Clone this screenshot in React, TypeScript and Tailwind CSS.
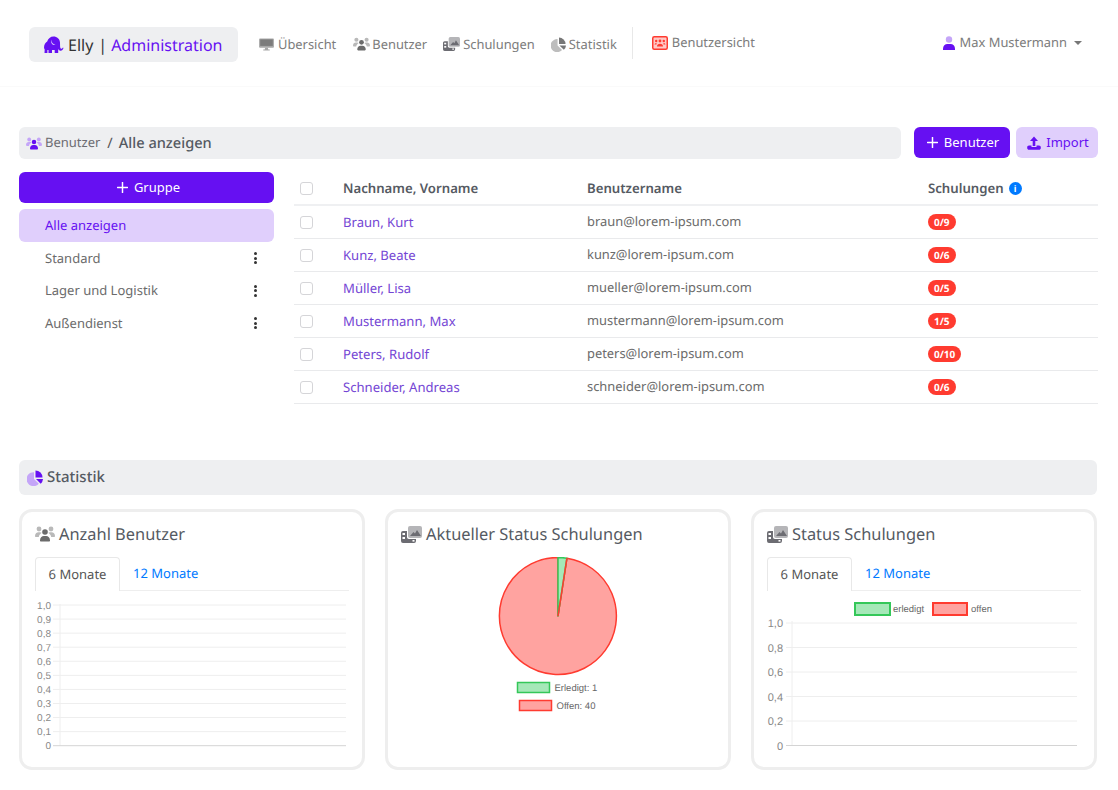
import React from 'react';

type IconProps = { a?: string; b?: string; className?: string };

const UsersIcon = ({ a = '#b9b9b9', b = '#6b6b6b', className = 'w-[17px] h-[14px]' }: IconProps) => (
  <svg viewBox="0 0 20 16" className={className}>
    <circle cx="4" cy="3" r="2.400" fill={a} />
    <circle cx="16" cy="3" r="2.400" fill={a} />
    <path d="M0 10c0-2.500 1.500-3.800 3.500-3.800h1.500c.6 0 1.200.2 1.700.6C5 8 4 9.300 3.800 11H1c-.6 0-1-.4-1-1zM20 10c0-2.500-1.500-3.800-3.500-3.800H15c-.6 0-1.200.2-1.700.6 1.700 1.200 2.700 2.500 2.900 4.200H19c.6 0 1-.4 1-1z" fill={a} />
    <circle cx="10" cy="6" r="2.800" fill={b} />
    <path d="M5 14.500c0-2.800 1.800-4.500 3.800-4.500h2.400c2 0 3.800 1.700 3.800 4.500 0 .6-.4 1-1 1H6c-.6 0-1-.4-1-1z" fill={b} />
  </svg>
);

const DesktopIcon = () => (
  <svg viewBox="0 0 16 14" className="w-[15px] h-[13px]">
    <rect x="0" y="0.500" width="16" height="10" rx="1" fill="#a8a8a8" />
    <rect x="1.200" y="1.500" width="13.600" height="7" fill="#7c7c7c" />
    <path d="M6.500 10.500h3l.4 2h1.600v1h-7v-1h1.600z" fill="#a8a8a8" />
  </svg>
);

const FilmIcon = ({ className = 'w-[17px] h-[14px]' }: IconProps) => (
  <svg viewBox="0 0 21 17" className={className}>
    <path d="M7 2a2 2 0 0 1 2-2h10a2 2 0 0 1 2 2v8a2 2 0 0 1-2 2H9a2 2 0 0 1-2-2z" fill="#b5b5b8" />
    <path d="M9 10l3.500-4 1.500 1.500L16 4l4 6z" fill="#6c6c72" />
    <path d="M0 7a2 2 0 0 1 2-2h4v6c0 1.200.8 2 2 2h7v2a2 2 0 0 1-2 2H2a2 2 0 0 1-2-2z" fill="#6c6c72" />
    <rect x="1.500" y="7" width="2.500" height="2" fill="#fff" />
    <rect x="1.500" y="11" width="2.500" height="2" fill="#fff" />
    <rect x="11.500" y="14" width="2" height="1.600" fill="#fff" />
  </svg>
);

const PieIcon = ({ a = '#bdbdbd', b = '#777', className = 'w-[15px] h-[15px]' }: IconProps) => (
  <svg viewBox="0 0 16 16" className={className}>
    <path d="M7 2.200V9l4.800 4.800A7 7 0 1 1 7 2.200z" fill={a} />
    <path d="M8.500 0.500A7 7 0 0 1 15.500 7.500H8.500z" fill={b} />
    <path d="M9 9h7a7 7 0 0 1-2.300 4.700z" fill={b} />
  </svg>
);

const ElephantIcon = () => (
  <svg viewBox="0 0 20 18" className="w-[20px] h-[18px]">
    <path
      d="M0 11.500C0 8.500 1.500 6.500 3.200 5.500 4 2.500 6.500.5 9.500.5c3.500 0 6.300 2.500 6.500 6 .1 2 0 4 .3 5.300.2.900 1.200 1.200 1.800.6l.9-.9.5.6c-.5 1.600-1.600 2.700-3 2.600-1.200-.1-2-.9-2.300-2V17h-3.500v-3H8v3H4.500v-3H3.400v3H.5l.2-3.500C.3 13 0 12.300 0 11.500z"
      fill="#6610f2"
    />
    <path d="M7.500 3.500c-.3 2.500 1 4.500 4 5.500-2.800.6-5.300-1.700-4-5.500z" fill="#d9c6fb" />
  </svg>
);

const PlusIcon = () => (
  <svg viewBox="0 0 12 12" className="w-[11px] h-[11px]">
    <path d="M6 .5v11M.5 6h11" stroke="#fff" strokeWidth="1.600" strokeLinecap="round" />
  </svg>
);

const ImportIcon = () => (
  <svg viewBox="0 0 14 14" className="w-[14px] h-[14px]">
    <path d="M7 .5L11 5H8.300v5H5.700V5H3z" fill="#6610f2" />
    <path d="M2 9.500h2.500v1.500h5V9.500H12c1 0 1.800.8 1.800 1.700v.8c0 1-.8 1.800-1.800 1.800H2c-1 0-1.800-.8-1.800-1.800v-.8c0-.9.8-1.700 1.800-1.700z" fill="#6610f2" />
  </svg>
);

const UserSwitchIcon = () => (
  <svg viewBox="0 0 16 14" className="w-[16px] h-[14px]">
    <rect x="0.750" y="0.750" width="14.500" height="12.500" rx="1.500" fill="#ffc9c6" stroke="#ff3b30" strokeWidth="1.500" />
    <circle cx="4.200" cy="5" r="1.200" fill="#ff3b30" />
    <circle cx="8" cy="5" r="1.400" fill="#ff3b30" />
    <circle cx="11.800" cy="5" r="1.200" fill="#ff3b30" />
    <path d="M5 10.500c0-1.700 1.200-2.700 3-2.700s3 1 3 2.700z" fill="#ff3b30" />
    <path d="M2.500 8.500c.3-1 1-1.500 2-1.500v1.500zM13.500 8.500c-.3-1-1-1.500-2-1.500v1.500z" fill="#ff3b30" />
  </svg>
);

const NavItem = ({ icon, label, className }: { icon: React.ReactNode; label: string; className: string }) => (
  <a className={`flex items-center text-[12.900px] text-[#7c7c7c] ${className}`}>
    {icon}
    <span>{label}</span>
  </a>
);

const groups = ['Standard', 'Lager und Logistik', 'Außendienst'];

const users = [
  { name: 'Braun, Kurt', mail: 'braun@lorem-ipsum.com', status: '0/9' },
  { name: 'Kunz, Beate', mail: 'kunz@lorem-ipsum.com', status: '0/6' },
  { name: 'Müller, Lisa', mail: 'mueller@lorem-ipsum.com', status: '0/5' },
  { name: 'Mustermann, Max', mail: 'mustermann@lorem-ipsum.com', status: '1/5' },
  { name: 'Peters, Rudolf', mail: 'peters@lorem-ipsum.com', status: '0/10' },
  { name: 'Schneider, Andreas', mail: 'schneider@lorem-ipsum.com', status: '0/6' },
];

const Checkbox = () => <span className="block w-[13px] h-[13px] rounded-[3px] border border-[#d5d5d8] bg-white" />;

const Tabs = () => (
  <div className="flex h-[34px] mt-[13px] border-b border-[#eeeeee] text-[13px]">
    <div className="w-[85px] h-[34px] flex items-center justify-center bg-white rounded-t border border-b-0 border-[#e8e8e8] text-[#555]">
      6 Monate
    </div>
    <div className="pl-[13px] flex items-center text-[#007aff]">12 Monate</div>
  </div>
);

const monthTicks = ['1,0', '0,9', '0,8', '0,7', '0,6', '0,5', '0,4', '0,3', '0,2', '0,1', '0'];

const UsersChart = () => (
  <svg viewBox="0 0 315 160" className="w-[315px] h-[160px] mt-[5px]">
    <line x1="25" y1="8" x2="25" y2="150" stroke="#eeeeee" />
    {monthTicks.map((t, i) => {
      const y = 9 + i * 14.07;
      return (
        <g key={t}>
          <line x1="18" y1={y} x2="311" y2={y} stroke={i === 10 ? '#d4d4d4' : '#eeeeee'} />
          <text x="16" y={y + 3.500} textAnchor="end" fontSize="10" fill="#888" fontFamily="Liberation Sans">
            {t}
          </text>
        </g>
      );
    })}
  </svg>
);

const StatusChart = () => (
  <svg viewBox="0 0 315 160" className="w-[315px] h-[160px]">
    <rect x="88" y="12" width="35" height="12" fill="#a5e8b8" stroke="#34c759" strokeWidth="2" />
    <text x="126" y="21" fontSize="9.500" fill="#666" fontFamily="Liberation Sans">erledigt</text>
    <rect x="166" y="12" width="34" height="12" fill="#ffa3a0" stroke="#ff3b30" strokeWidth="2" />
    <text x="204" y="21" fontSize="9.500" fill="#666" fontFamily="Liberation Sans">offen</text>
    <line x1="25" y1="30" x2="25" y2="155" stroke="#eeeeee" />
    {['1,0', '0,8', '0,6', '0,4', '0,2', '0'].map((t, i) => {
      const y = 32 + i * 24.500;
      return (
        <g key={t}>
          <line x1="19" y1={y} x2="310" y2={y} stroke={i === 5 ? '#d4d4d4' : '#eeeeee'} />
          <text x="16" y={y + 4} textAnchor="end" fontSize="11" fill="#888" fontFamily="Liberation Sans">
            {t}
          </text>
        </g>
      );
    })}
  </svg>
);

const PieChart = () => (
  <svg viewBox="0 0 160 170" className="w-[160px] h-[170px] mx-auto mt-[13px]">
    <g transform="translate(1 0)">
      <path d="M79 59 L79 0.500 A58.500 58.500 0 1 0 87.900 1.200 Z" fill="#ffa3a0" stroke="#ff3b30" strokeWidth="1.500" strokeLinejoin="round" />
      <path d="M79 59 L79 0.500 A58.500 58.500 0 0 1 87.900 1.200 Z" fill="#a5e8b8" stroke="#34c759" strokeWidth="1.500" strokeLinejoin="round" />
      <path d="M79 59 L87.900 1.200" stroke="#ff3b30" strokeWidth="1.500" />
    </g>
    <rect x="39.500" y="125.500" width="32" height="10" fill="#a5e8b8" stroke="#34c759" strokeWidth="1.500" />
    <text x="76.500" y="133.500" fontSize="9.500" fill="#666" fontFamily="Liberation Sans">Erledigt: 1</text>
    <rect x="41.500" y="143.500" width="32" height="10" fill="#ffa3a0" stroke="#ff3b30" strokeWidth="1.500" />
    <text x="78.500" y="151.500" fontSize="9.500" fill="#666" fontFamily="Liberation Sans">Offen: 40</text>
  </svg>
);

const Card = ({ icon, title, children }: { icon: React.ReactNode; title: string; children: React.ReactNode }) => (
  <div className="w-[346px] h-[261px] border-[3px] border-[#eeeeee] rounded-[13px] px-[13px] bg-white overflow-hidden">
    <div className="flex items-center h-[20px] mt-[12px] gap-[4px] text-[16.400px] text-[#555a62]">
      {icon}
      <span>{title}</span>
    </div>
    {children}
  </div>
);

export default function App() {
  return (
    <div
      className="w-[1118px] h-[790px] overflow-hidden bg-white text-[13px] text-[#555] antialiased [text-rendering:geometricPrecision]"
      style={{ fontFamily: '"Noto Sans", sans-serif' }}
    >
      {/* Navbar */}
      <nav className="h-[87px] pt-[27px] pl-[29px] pr-[36px] flex items-start border-b border-[#fafafa]">
        <div className="w-[209px] h-[35px] flex items-center pl-[15px] rounded-md bg-[#eeeff1] text-[16px] text-[#333]">
          <ElephantIcon />
          <span className="ml-[4px]">Elly</span>
          <span className="ml-[5px] mr-[4px]">|</span>
          <span className="text-[#6610f2]">Administration</span>
        </div>
        <div className="flex items-center h-[35px] ml-[21px]">
          <NavItem icon={<DesktopIcon />} label="Übersicht" className="gap-[4px]" />
          <NavItem icon={<UsersIcon />} label="Benutzer" className="gap-[2px] ml-[17px]" />
          <NavItem icon={<FilmIcon />} label="Schulungen" className="gap-[3px] ml-[16px]" />
          <NavItem icon={<PieIcon />} label="Statistik" className="gap-[3px] ml-[16px]" />
        </div>
        <div className="w-px h-[32px] bg-[#e8e8e8] ml-[15px]" />
        <a className="flex items-center gap-[4px] h-[32px] ml-[19px] text-[12.900px] text-[#7c7c7c]">
          <UserSwitchIcon />
          <span>Benutzersicht</span>
        </a>
        <div className="ml-auto flex items-center h-[32px] text-[12.900px] text-[#7c7c7c]">
          <svg viewBox="0 0 12 14" className="w-[12px] h-[14px] mr-[5px]">
            <circle cx="6" cy="3.500" r="3.200" fill="#c4a5f8" />
            <path d="M0 14v-1.500C0 10 2 8 4.500 8h3C10 8 12 10 12 12.500V14z" fill="#6610f2" />
          </svg>
          <span>Max Mustermann</span>
          <span className="ml-[7px] w-0 h-0 border-x-4 border-t-4 border-x-transparent border-t-[#777]" />
        </div>
      </nav>

      <div className="pl-[19px] pr-[20px] mt-[40px]">
        {/* Breadcrumb row */}
        <div className="flex items-start">
          <div className="w-[882px] h-[32px] flex items-center pl-[7px] rounded-md bg-[#eeeff1]">
            <UsersIcon a="#c4a5f8" b="#6610f2" className="w-[16px] h-[13px]" />
            <span className="ml-[3px] -mt-[1px] text-[13px] text-[#6c6c72]">Benutzer</span>
            <span className="ml-[7px] mt-[1px] text-[14.500px] text-[#555]">/</span>
            <span className="ml-[6px] mt-[1px] text-[14.600px] font-medium text-[#555a62]">Alle anzeigen</span>
          </div>
          <button className="ml-[13px] w-[96px] h-[31px] flex items-center justify-center gap-[6px] pl-[2px] rounded-md bg-[#6610f2] text-white text-[13px]">
            <PlusIcon />
            Benutzer
          </button>
          <button className="ml-[6px] w-[82px] h-[31px] flex items-center justify-center gap-[5px] pl-[2px] rounded-md bg-[#e0cffc] text-[#6610f2] text-[13px]">
            <ImportIcon />
            Import
          </button>
        </div>

        {/* Groups + table */}
        <div className="flex mt-[13px]">
          <aside className="w-[255px]">
            <button className="w-full h-[31px] flex items-center justify-center gap-[6px] pl-[4px] rounded-md bg-[#6610f2] text-white text-[13px]">
              <PlusIcon />
              Gruppe
            </button>
            <div className="h-[33px] mt-[6px] flex items-center pl-[26px] rounded-md bg-[#e0cffc] text-[#6610f2]">Alle anzeigen</div>
            {groups.map((g) => (
              <div key={g} className="h-[32.500px] flex items-center justify-between pl-[26px] pr-[17px] text-[#6b6b6b]">
                <span>{g}</span>
                <span className="flex flex-col gap-[1.500px]">
                  <i className="block w-[3px] h-[3px] rounded-full bg-[#333]" />
                  <i className="block w-[3px] h-[3px] rounded-full bg-[#333]" />
                  <i className="block w-[3px] h-[3px] rounded-full bg-[#333]" />
                </span>
              </div>
            ))}
          </aside>

          <div className="ml-[20px] w-[804px]">
            <div className="grid grid-cols-[49px_244px_341px_170px] items-center h-[34px] border-b-2 border-[#eff0f2] text-[13.200px] font-semibold text-[#555a62]">
              <div className="pl-[6px]">
                <Checkbox />
              </div>
              <div className="pt-[1px]">Nachname, Vorname</div>
              <div className="pt-[1px]">Benutzername</div>
              <div className="flex items-center gap-[5px] pt-[1px]">
                Schulungen
                <span className="w-[13px] h-[13px] rounded-full bg-[#007aff] text-white text-[9px] font-bold leading-[13px] text-center">i</span>
              </div>
            </div>
            {users.map((u) => (
              <div key={u.mail} className="grid grid-cols-[49px_244px_341px_170px] items-center h-[33px] border-b border-[#e9eaec]">
                <div className="pl-[6px]">
                  <Checkbox />
                </div>
                <a className="pt-[1px] text-[13.100px] text-[#7446d4]">{u.name}</a>
                <div className="text-[12.900px] text-[#6b6b6b]">{u.mail}</div>
                <div>
                  <span className="inline-block h-[16px] px-[6px] rounded-full bg-[#ff3b30] text-white text-[10px] font-bold leading-[16px]">{u.status}</span>
                </div>
              </div>
            ))}
          </div>
        </div>

        {/* Statistics */}
        <div className="w-[1078px] h-[35px] mt-[56px] flex items-center gap-[4px] pl-[8px] rounded-md bg-[#eeeff1] text-[15px] font-medium text-[#555a62]">
          <PieIcon a="#c4a5f8" b="#6610f2" className="w-[16px] h-[16px]" />
          Statistik
        </div>

        <div className="flex gap-[20px] mt-[14px]">
          <Card icon={<UsersIcon className="w-[20px] h-[16px]" />} title="Anzahl Benutzer">
            <Tabs />
            <UsersChart />
          </Card>
          <Card icon={<FilmIcon className="w-[21px] h-[17px]" />} title="Aktueller Status Schulungen">
            <PieChart />
          </Card>
          <Card icon={<FilmIcon className="w-[21px] h-[17px]" />} title="Status Schulungen">
            <Tabs />
            <StatusChart />
          </Card>
        </div>
      </div>
    </div>
  );
}
